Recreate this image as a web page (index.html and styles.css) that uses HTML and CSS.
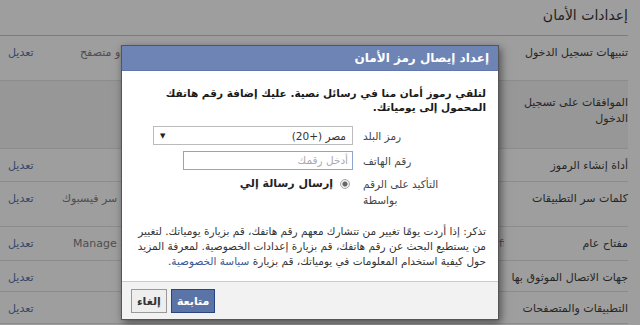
FILE: index.html
```html
<!DOCTYPE html>
<html lang="ar" dir="rtl">
<head>
  <meta charset="UTF-8">
  <title>إعدادات الأمان</title>
  <link rel="stylesheet" href="styles.css">
</head>
<body>
<div class="page">
  <h1 class="page-title">إعدادات الأمان</h1>

  <div class="settings">
    <div class="row row-h45">
      <div class="row-label">تنبيهات تسجيل الدخول</div>
      <div class="row-value value-alerts">احصل على تنبيه عند تسجيل الدخول إلى حسابك من جهاز أو متصفح</div>
      <a class="row-edit">تعديل</a>
    </div>
    <div class="row row-open">
      <div class="row-label">الموافقات على تسجيل الدخول</div>
      <div class="row-value"></div>
      <a class="row-edit"></a>
    </div>
    <div class="row row-h33">
      <div class="row-label">أداة إنشاء الرموز</div>
      <div class="row-value"></div>
      <a class="row-edit">تعديل</a>
    </div>
    <div class="row row-h45">
      <div class="row-label">كلمات سر التطبيقات</div>
      <div class="row-value value-apps">استخدم كلمات سر خاصة لتسجيل الدخول إلى تطبيقاتك بدلاً من كلمة سر فيسبوك</div>
      <a class="row-edit">تعديل</a>
    </div>
    <div class="row row-h34">
      <div class="row-label">مفتاح عام</div>
      <div class="row-value value-key">Manage an OpenPGP key on your Facebook profile and enable encrypted notifications</div>
      <a class="row-edit">تعديل</a>
    </div>
    <div class="row row-h31">
      <div class="row-label">جهات الاتصال الموثوق بها</div>
      <div class="row-value"></div>
      <a class="row-edit">تعديل</a>
    </div>
    <div class="row row-h32">
      <div class="row-label">التطبيقات والمتصفحات</div>
      <div class="row-value"></div>
      <a class="row-edit">تعديل</a>
    </div>
  </div>
</div>

<div class="dialog">
  <div class="dialog-header">إعداد إيصال رمز الأمان</div>

  <div class="dialog-body">
    <p class="intro">لتلقي رموز أمان منا في رسائل نصية. عليك إضافة رقم هاتفك<br>المحمول إلى يومياتك.</p>

    <div class="form">
      <label class="form-label">رمز البلد</label>
      <div class="select">
        <span>مصر (+20)</span>
        <span class="select-arrow">▼</span>
      </div>

      <label class="form-label">رقم الهاتف</label>
      <div class="input">أدخل رقمك</div>

      <label class="form-label">التأكيد على الرقم<br>بواسطة</label>
      <div class="radio-line">
        <span class="radio"></span>
        <span class="radio-text">إرسال رسالة إلي</span>
      </div>
    </div>

    <p class="note">تذكر: إذا أردت يومًا تغيير من تتشارك معهم رقم هاتفك، قم بزيارة يومياتك. لتغيير<br>من يستطيع البحث عن رقم هاتفك، قم بزيارة إعدادات الخصوصية. لمعرفة المزيد<br>حول كيفية استخدام المعلومات في يومياتك، قم بزيارة <a class="link">سياسة الخصوصية</a>.</p>
  </div>

  <div class="dialog-footer">
    <button class="btn btn-primary">متابعة</button>
    <button class="btn">إلغاء</button>
  </div>
</div>
</body>
</html>
```

FILE: styles.css
```css
html, body { margin: 0; height: 100%; }
body {
  font-family: "DejaVu Sans", sans-serif;
  font-size: 11px;
  background: #9e9e9e;
  color: #222;
  overflow: hidden;
}
.page { padding: 0 12px 0 0; }
.page-title {
  margin: 0;
  height: 36px;
  box-sizing: border-box;
  padding-top: 5px;
  font-size: 14px;
  font-weight: normal;
  line-height: 20px;
  color: #1e1e1e;
  border-bottom: 1px solid #7c7c7c;
}
.row {
  display: flex;
  align-items: flex-start;
  box-sizing: border-box;
  padding-top: 10px;
  line-height: 14px;
  border-bottom: 1px solid #8c8c8c;
  white-space: nowrap;
}
.row-h31 { height: 31px; }
.row-h32 { height: 32px; }
.row-h33 { height: 33px; }
.row-h34 { height: 34px; }
.row-h45 { height: 45px; }
.row-open { height: 68px; padding-top: 14px; line-height: 16px; background: #979797; }
.row-label { width: 124px; flex-shrink: 0; color: #262626; white-space: normal; }
.row-value {
  flex: 1;
  overflow: hidden;
  text-align: left;
  color: #4e4e4e;
  padding-left: 26px;
}
.value-alerts { padding-left: 38px; }
.value-apps { padding-left: 20px; }
.value-key { direction: ltr; padding-left: 31px; }
.row-edit { width: 34px; padding-left: 8px; color: #34466a; text-align: left; }

.dialog {
  position: absolute;
  left: 121px;
  top: 45px;
  width: 376px;
  background: #fff;
  border: 1px solid #555;
  box-shadow: 2px 3px 8px rgba(0, 0, 0, 0.5);
}
.dialog-header {
  background: #6d84b4;
  color: #fff;
  font-weight: bold;
  font-size: 12px;
  line-height: 24px;
  height: 24px;
  padding: 0 9px;
  border-bottom: 1px solid #5f77aa;
}
.dialog-body { padding: 15px 12px 12px 12px; font-size: 10.5px; }
.intro { margin: 0; line-height: 14px; color: #1a1a1a; font-weight: bold; }

.form {
  display: grid;
  grid-template-columns: 90px 200px;
  column-gap: 10px;
  row-gap: 6px;
  margin: 12px 33px 16px 0;
  align-items: center;
}
.form-label { color: #444; text-align: left; line-height: 16px; white-space: nowrap; }
.select {
  display: flex;
  justify-content: space-between;
  align-items: center;
  height: 17px;
  padding: 0 6px;
  border: 1px solid #bbb;
  color: #333;
}
.select-arrow { font-size: 7px; color: #222; }
.input {
  width: 160px;
  height: 17px;
  line-height: 17px;
  padding: 0 4px;
  border: 1px solid #8fa4cc;
  color: #aaa;
}
.radio-line { display: flex; align-items: center; gap: 7px; color: #222; align-self: start; padding: 0 3px; line-height: 16px; }
.radio-text { font-size: 11px; font-weight: bold; }
.radio {
  width: 8px;
  height: 8px;
  border-radius: 50%;
  border: 1px solid #aaa;
  background: radial-gradient(circle, #666 0 2px, #eee 3px);
}
.note { margin: 0; line-height: 15px; color: #333; }
.link { color: #3b5998; }

.dialog-footer {
  display: flex;
  justify-content: flex-end;
  gap: 4px;
  padding: 7px 9px 6px;
  background: #f2f2f2;
  border-top: 1px solid #ccc;
}
.btn {
  font-family: "DejaVu Sans", sans-serif;
  font-size: 11px;
  font-weight: bold;
  height: 24px;
  padding: 0 5px;
  border: 1px solid #999;
  background: #eee;
  color: #333;
}
.btn-primary { background: #5b74a8; border-color: #29447e; color: #fff; }
```
